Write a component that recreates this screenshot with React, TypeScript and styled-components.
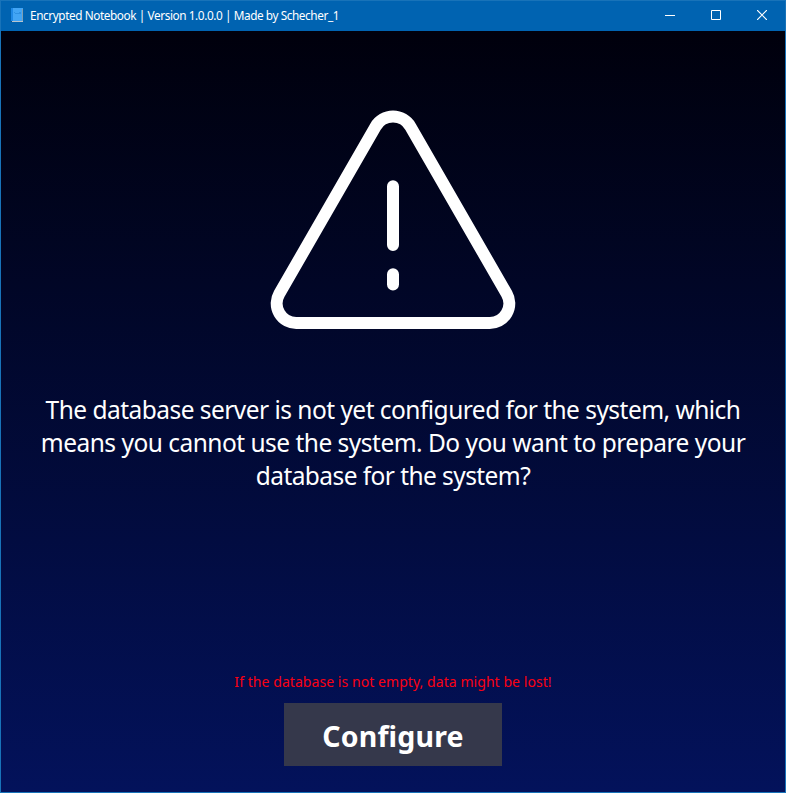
import React from 'react';
import styled, { createGlobalStyle } from 'styled-components';

const GlobalStyle = createGlobalStyle`
  *, *::before, *::after { box-sizing: border-box; }
  html, body, #root { margin: 0; height: 100%; }
  body { overflow: hidden; font-family: "Segoe UI", "Noto Sans", "Open Sans", sans-serif; }
`;

const Window = styled.div`
  display: flex;
  flex-direction: column;
  width: 786px;
  height: 793px;
  border: 1px solid #1873b9;
  background: #00000c;
`;

const TitleBar = styled.header`
  display: flex;
  align-items: center;
  flex: 0 0 30px;
  padding: 0 0 2px 10px;
  background: #0063b1;
  color: #fff;
`;

const Title = styled.h1`
  flex: 1;
  margin: 0 0 0 7px;
  font-size: 11.8px;
  font-weight: 400;
  line-height: 28px;
  letter-spacing: -0.42px;
  white-space: nowrap;
`;

const WindowButton = styled.button`
  display: flex;
  align-items: center;
  justify-content: center;
  width: 46px;
  height: 28px;
  padding: 0;
  border: 0;
  background: transparent;
  color: #fff;
`;

const Content = styled.main`
  display: flex;
  flex: 1;
  flex-direction: column;
  align-items: center;
  padding: 79px 0 26px;
  background: linear-gradient(#00000c, #03125b);
`;

const Message = styled.p`
  width: 740px;
  margin: 63px 0 0;
  color: #fff;
  font-size: 24.5px;
  line-height: 33px;
  text-align: center;
`;

const Line = styled.span<{ $spacing: number }>`
  display: block;
  white-space: nowrap;
  letter-spacing: ${({ $spacing }) => $spacing}px;
`;

const Warning = styled.p`
  margin: auto 0 11px;
  color: #fb0012;
  font-size: 14px;
  line-height: 20px;
  letter-spacing: 0.06px;
`;

const ConfigureButton = styled.button`
  width: 218px;
  height: 63px;
  padding: 2px 0 0;
  border: 0;
  background: #35384b;
  color: #fff;
  font: 700 28.5px/40px "Segoe UI", "Noto Sans", "Open Sans", sans-serif;
  letter-spacing: 0.15px;
`;

const NotebookIcon = () => (
  <svg width="12" height="14" viewBox="0 0 12 14" shapeRendering="crispEdges" aria-hidden="true">
    <path fill="#1e88e5" d="M0 0h2v13H0z" />
    <path fill="#42a5f5" d="M2 0h10v13H2z" />
    <path fill="#2e91e3" d="M3 4h1v1h4V4h2v2H4V5H3z" />
    <path fill="#7d9fb5" d="M11 1h1v12h-1z" />
    <path fill="#174f80" d="M0 13h1v1H0z" />
    <path fill="#b7c5cf" d="M1 13h11v1H1z" />
  </svg>
);

const WarningIcon = () => (
  <svg width="246" height="220" viewBox="270 110 246 220" fill="none" stroke="#fff" strokeWidth="12" strokeLinecap="round" aria-hidden="true">
    <path d="M296.2 323H489.8A19.5 19.5 0 0 0 506.7 293.8L410.5 126.7A20.2 20.2 0 0 0 375.5 126.7L279.3 293.8A19.5 19.5 0 0 0 296.2 323Z" />
    <path d="M393 186.2V245M393 274.2V284.5" />
  </svg>
);

const Glyph = ({ path, soft = false }: { path: string; soft?: boolean }) => (
  <svg width="10" height="10" viewBox="0 0 10 10" fill="none" stroke="currentColor" strokeWidth={soft ? 1.2 : 1} aria-hidden="true">
    <path d={path} />
  </svg>
);

export default function App() {
  return (
    <>
      <GlobalStyle />
      <Window>
        <TitleBar>
          <NotebookIcon />
          <Title>Encrypted Notebook | Version 1.0.0.0 | Made by Schecher_1</Title>
          <WindowButton aria-label="Minimize"><Glyph path="M0 5.5h10" /></WindowButton>
          <WindowButton aria-label="Maximize"><Glyph path="M.5.5h9v9h-9z" /></WindowButton>
          <WindowButton aria-label="Close"><Glyph soft path="M0 0L10 10M10 0L0 10" /></WindowButton>
        </TitleBar>
        <Content>
          <WarningIcon />
          <Message>
            <Line $spacing={-0.53}>The database server is not yet configured for the system, which</Line>
            <Line $spacing={-0.51}>means you cannot use the system. Do you want to prepare your</Line>
            <Line $spacing={-0.57}>database for the system?</Line>
          </Message>
          <Warning>If the database is not empty, data might be lost!</Warning>
          <ConfigureButton>Configure</ConfigureButton>
        </Content>
      </Window>
    </>
  );
}
